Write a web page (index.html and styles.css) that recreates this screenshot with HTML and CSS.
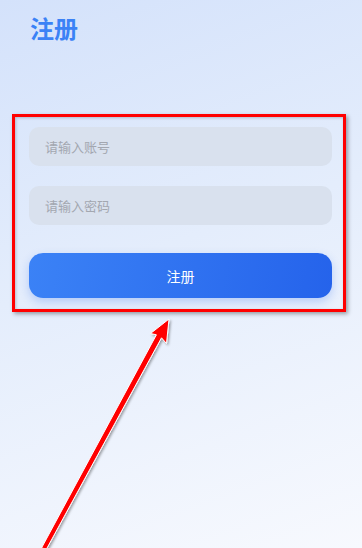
FILE: index.html
```html
<!DOCTYPE html>
<html lang="zh-CN">
<head>
  <meta charset="UTF-8" />
  <meta name="viewport" content="width=device-width, initial-scale=1.0" />
  <title>注册</title>
  <link rel="stylesheet" href="styles.css">
</head>
<body>
  <div class="page">
    <h1 class="title">注册</h1>

    <form class="form" onsubmit="return false;">
      <input class="field" type="text" placeholder="请输入账号" />
      <input class="field" type="password" placeholder="请输入密码" />
      <button class="submit" type="submit">注册</button>
      <div class="mark-box"></div>
    </form>

    <!-- стрелка-пометка -->
    <svg class="mark-arrow" width="362" height="548" viewBox="0 0 362 548">
      <defs>
        <filter id="sh" x="-20%" y="-20%" width="140%" height="140%">
          <feDropShadow dx="1.5" dy="1.5" stdDeviation="1.2" flood-color="#000" flood-opacity="0.35" />
        </filter>
      </defs>
      <polygon filter="url(#sh)" fill="#ff0000" stroke="#ffffff" stroke-width="1" stroke-linejoin="round"
        points="169,319 166.5,343.5 161.5,337.8 46.5,549 41.5,548 156.4,334.8 150.5,333.5" />
    </svg>
  </div>
</body>
</html>
```

FILE: styles.css
```css
html, body {
  margin: 0;
  padding: 0;
}
body {
  font-family: "Noto Sans CJK SC", "Noto Sans", Arial, sans-serif;
}
.page {
  position: relative;
  height: 548px;
  overflow: hidden;
  box-sizing: border-box;
  padding: 11px 30px 0 29px;
  background: linear-gradient(160deg, #d4e2fb 0%, #e4edfc 45%, #f7f9fe 100%);
}
.title {
  margin: 0 0 0 1px;
  font-size: 24px;
  line-height: 34px;
  font-weight: bold;
  color: #3b82f6;
}
.form {
  position: relative;
  display: flex;
  flex-direction: column;
  margin-top: 82px;
}
.field {
  height: 39px;
  padding: 0 16px;
  border: none;
  border-radius: 10px;
  background: #d9e1ee;
  font-family: inherit;
  font-size: 13px;
  color: #333;
  outline: none;
  margin-bottom: 20px;
}
.field::placeholder {
  color: #a3a7b0;
}
.submit {
  margin-top: 8px;
  height: 45px;
  border: none;
  border-radius: 14px;
  background: linear-gradient(100deg, #3b82f6 0%, #2563eb 100%);
  box-shadow: 0 4px 10px rgba(37, 99, 235, 0.25);
  color: #fff;
  font-family: inherit;
  font-size: 14px;
}
.mark-box {
  position: absolute;
  left: -17px;
  right: -14px;
  top: -13px;
  bottom: -14px;
  border: 3px solid #ff0000;
  box-shadow: 2px 2px 4px rgba(0, 0, 0, 0.35), inset 1px 1px 3px rgba(0, 0, 0, 0.2);
  pointer-events: none;
}
.mark-arrow {
  position: absolute;
  left: 0;
  top: 0;
  pointer-events: none;
}
```
